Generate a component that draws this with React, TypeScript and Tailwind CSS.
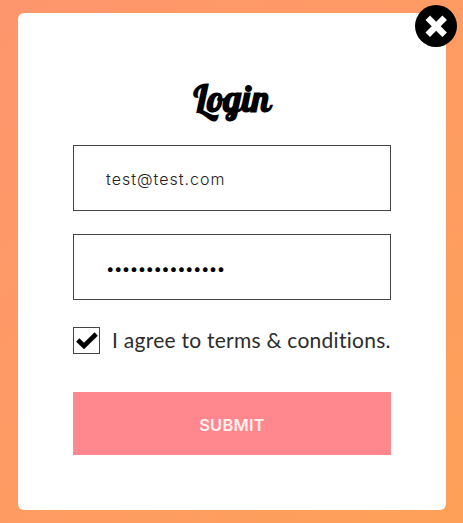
import React, { useState } from 'react';

// --- ICONS ---
function CloseIcon() {
  return (
    <svg viewBox="0 0 42 42" className="block h-[42px] w-[42px]" aria-hidden="true">
      <circle cx="21" cy="21" r="21" fill="#000" />
      <path d="M15 15.1 27.4 27.5M27.4 15.1 15 27.5" stroke="#fff" strokeWidth="6.4" strokeLinecap="square" strokeLinejoin="round" />
    </svg>
  );
}

function CheckIcon() {
  return (
    <svg viewBox="0 0 22 17" className="block h-[17px] w-[22px]" aria-hidden="true">
      <path d="M1.7 8 8 14 20.2 2" fill="none" stroke="#000" strokeWidth="4.6" />
    </svg>
  );
}

// --- LOGIN MODAL ---
export default function App() {
  const [email, setEmail] = useState('test@test.com');
  const [password, setPassword] = useState('passwordpasswor');
  const [agreed, setAgreed] = useState(true);

  return (
    <div className="h-[523px] w-[463px] overflow-hidden bg-linear-to-br from-[#fe966d] to-[#fea058] pt-[13px] pl-[18px]">
      <div className="relative h-[497px] w-[428px] rounded-md bg-white px-[55px] pt-[61px]">
        <button type="button" aria-label="Close" className="absolute -top-[8px] -right-[11px]">
          <CloseIcon />
        </button>

        <form onSubmit={(e) => e.preventDefault()}>
          <h1 className="h-[71px] text-center font-['Lobster','Liberation_Serif',serif] text-[37px] leading-[48px] font-bold tracking-[-0.1px] text-black">
            Login
          </h1>
          <input
            type="text"
            value={email}
            onChange={(e) => setEmail(e.target.value)}
            className="block h-[66px] w-full border border-[#444] px-8 pt-px font-[Inter,sans-serif] text-base font-light tracking-[1px] text-[#222] outline-none"
          />
          <input
            type="password"
            value={password}
            onChange={(e) => setPassword(e.target.value)}
            className="mt-[23px] block h-[66px] w-full border border-[#444] px-8 pt-[3px] font-[Inter,sans-serif] text-[15px] tracking-[-0.53px] text-black outline-none"
          />
          <label className="mt-[26px] flex h-[28px] items-center">
            <input type="checkbox" className="sr-only" checked={agreed} onChange={() => setAgreed(!agreed)} />
            <span className="flex h-[27px] w-[27px] shrink-0 items-center justify-center border border-[#444]">
              {agreed && <CheckIcon />}
            </span>
            <span className="ml-3 font-[Lato,sans-serif] text-[21px] leading-7 tracking-[0.26px] whitespace-nowrap text-[#2c2c2c]">
              I agree to terms &amp; conditions.
            </span>
          </label>
          <button type="submit" className="mt-[38px] block h-[63px] w-full bg-[#ff878d] pt-1 font-[Inter,sans-serif] text-[16.5px] font-semibold tracking-[0.2px] text-[#fff0f0]">
            SUBMIT
          </button>
        </form>
      </div>
    </div>
  );
}
